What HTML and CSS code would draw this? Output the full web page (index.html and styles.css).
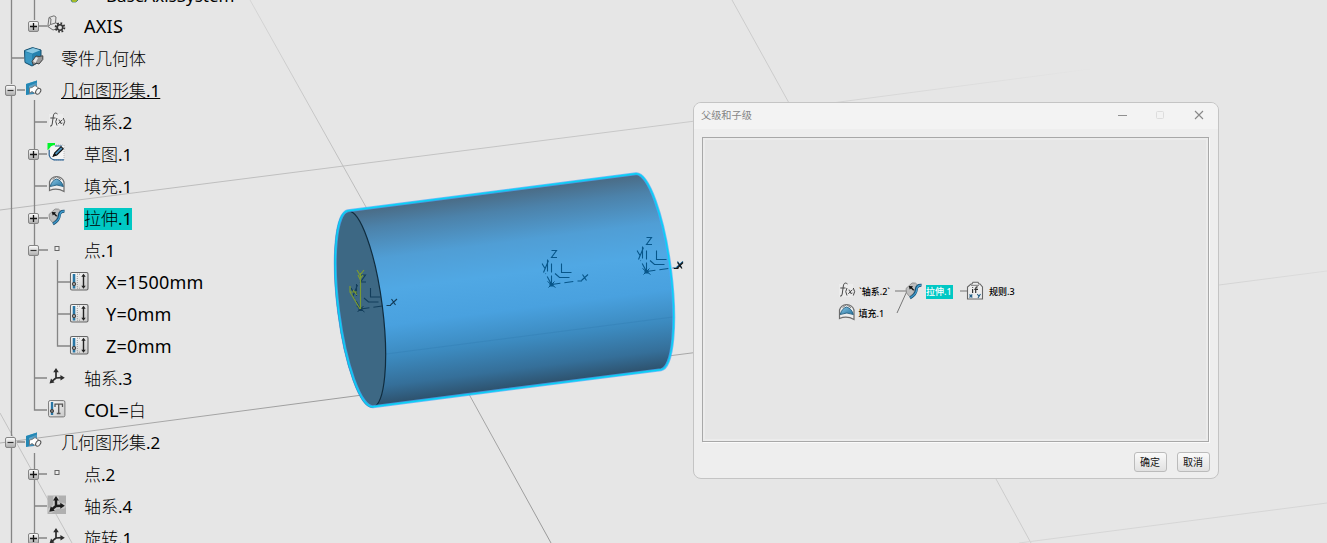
FILE: index.html
```html
<!DOCTYPE html>
<html lang="zh-CN">
<head>
<meta charset="utf-8">
<title>父级和子级</title>
<link rel="stylesheet" href="styles.css">
</head>
<body>
<svg class="defs" aria-hidden="true">
  <defs>
    <linearGradient id="btn" x1="0" y1="0" x2="0" y2="1"><stop offset="0" stop-color="#fff"/><stop offset="1" stop-color="#aaa"/></linearGradient>
    <linearGradient id="blue" x1="0" y1="0" x2="1" y2="1"><stop offset="0" stop-color="#8bc8e6"/><stop offset="1" stop-color="#23729f"/></linearGradient>
    <linearGradient id="paper" x1="0" y1="0" x2="1" y2="1"><stop offset="0" stop-color="#fff"/><stop offset="1" stop-color="#c8c8c8"/></linearGradient>
  </defs>
  <symbol id="plus" viewBox="0 0 11 11"><rect x=".5" y=".5" width="10" height="10" rx="1.5" fill="url(#btn)" stroke="#858585"/><path d="M2 5.5H9M5.5 2V9" stroke="#151515" stroke-width="1.3"/></symbol>
  <symbol id="minus" viewBox="0 0 11 11"><rect x=".5" y=".5" width="10" height="10" rx="1.5" fill="url(#btn)" stroke="#858585"/><path d="M2.5 5.5H8.5" stroke="#333" stroke-width="1.2"/></symbol>
  <symbol id="gear" viewBox="0 0 20 20"><path d="M2 2.5L7 .8 9 2 8.5 8 11 8.5 9 14 6 15 .8 11.5ZM2 2.5L4 4 3.5 9.5 .8 11.5M3.5 9.5L8.5 8" fill="#e5e5e5" stroke="#707070" stroke-width="1"/><circle cx="13" cy="12.5" r="4.3" fill="none" stroke="#333" stroke-width="2" stroke-dasharray="1.7 1.67"/><circle cx="13" cy="12.5" r="2.7" fill="#ddd" stroke="#333" stroke-width="1.5"/></symbol>
  <symbol id="part" viewBox="0 0 20 20"><path d="M.5 3.5L8.5 .6 17 3V14L8 19 1 15.5Z" fill="#2581ad" stroke="#164e6d"/><path d="M1 4L9 1 16.3 3.2 8.3 6.5Z" fill="#8bc9e3"/><path d="M1.3 5L8 7V18L1.5 15Z" fill="#3b98c3"/><path d="M8 14.5L12 9 15 9.5 18.8 8.8V12.5L15 17 12 16 9.5 18Z" fill="#999" stroke="#444" stroke-width="1"/><path d="M9 14L12 10 14 11 11.5 16" fill="#e5e5e5"/></symbol>
  <symbol id="set" viewBox="0 0 20 20"><path d="M2 5L13 1.5V9L10 15 2 16Z" fill="url(#blue)"/><path d="M2 5L13 1.5V3.5L5 7V15L2 16Z" fill="#2488b5"/><path d="M5.5 9L8 8.5 11 6.5 16 10 11 14.5 8 12.5 5.5 14Z" fill="#fff" stroke="#777" stroke-width=".9"/><ellipse cx="14.2" cy="12.2" rx="2.2" ry="3.2" transform="rotate(35 14.2 12.2)" fill="#f2f2f2" stroke="#555"/></symbol>
  <symbol id="fx" viewBox="0 0 20 20"><rect x="2" y="3" width="14" height="13" fill="#f0f0f0" opacity=".6"/><path d="M10.5 3C7.6 .7 6.5 3 6.2 6L5.2 13Q4.8 16 3 15M3.3 7H8.5M10 7Q7.5 10.5 10 14.5M16.3 7Q19 10.5 16.3 14.5M11.6 9Q13 8.5 13.2 11T15.4 12M15.4 8.7L11.3 12.8" fill="none" stroke="#484848" stroke-width="1"/></symbol>
  <symbol id="sketch" viewBox="0 0 20 20"><path d="M3 2H17V17H6L2 13Z" fill="#f5f5f5" stroke="#bbb" stroke-dasharray="1 1"/><path d="M2.2 7V12Q3 16 7 16.8H17M8 3H15" fill="none" stroke="#2f6799" stroke-width="1.2"/><path d="M.5 0H8V2Q5 2 3.8 3.5T1 7H.5Z" fill="#00f52b"/><path d="M6.5 13L7.8 9.8 14 3.7 16.2 5.7 9.8 12Z" fill="#4a91bd" stroke="#111" stroke-width="1.1"/><path d="M5.3 14L7.5 9.8 9.5 12.2Z" fill="#111"/></symbol>
  <symbol id="fill" viewBox="0 0 20 20"><path d="M2.5 15.5V7Q4 2 9.5 1.5 15.5 2 17 7V16.5Q10 12.5 2.5 15.5Z" fill="#eee" stroke="#6c6c6c" stroke-width="1.2"/><path d="M3.2 11.5Q4.8 5.5 9.5 4 14.8 5.5 16.3 11.5 10 8.5 3.2 11.5Z" fill="url(#blue)" stroke="#255f80" stroke-width=".9"/><path d="M5.5 4.7L9.5 1.5 14 4.7" fill="none" stroke="#777"/></symbol>
  <symbol id="extrude" viewBox="0 0 20 20"><path d="M2 7.5L8 2Q12 1 14 4.5L11 8.5 9.5 12.5 5.5 15.5 2.5 12Z" fill="#bebebe" stroke="#858585" stroke-width=".8"/><path d="M17.5 4.3Q12.8 4 12.3 8.5 12 13.500 6 17" fill="none" stroke="#174d70" stroke-width="3"/><path d="M17.2 4.3Q13.300 4 12.7 8.5 12.300 13.500 6.300 16.700" fill="none" stroke="#3e9acb" stroke-width="1.5"/><path d="M4.800 5L9 5.300 8 6.400 10.200 8.800 9.200 9.800 7 7.400 5.700 8.500Z" fill="#151515"/></symbol>
  <symbol id="point" viewBox="0 0 20 20"><rect x="8" y="7.5" width="4" height="4" fill="#eee" stroke="#666"/></symbol>
  <symbol id="length" viewBox="0 0 20 20"><rect x="1.5" y="1.5" width="17.5" height="17.5" rx="1.5" fill="url(#paper)" stroke="#666" stroke-width="1.1"/><path d="M5 3V17.5" stroke="#2876a5" stroke-width="2.6"/><path d="M8 3.200H11.5M8 17.200H11.5M8.300 5V16" stroke="#999" stroke-dasharray="1 1"/><circle cx="5" cy="13" r="1.7" fill="#999" stroke="#444"/><path d="M14.5 5V16" stroke="#222" stroke-width="1.4"/><path d="M14.5 2.700L16.700 5.700H12.300ZM14.5 17.700L16.700 14.700H12.300Z" fill="#222"/></symbol>
  <symbol id="string" viewBox="0 0 20 20"><rect x="1.6" y="1.6" width="16.3" height="16.3" rx="1.5" fill="url(#paper)" stroke="#777"/><path d="M5 3V16" stroke="#2876a5" stroke-width="2.4"/><circle cx="5" cy="12" r="1.6" fill="#777" stroke="#444"/><path d="M8 8V5.2H15.5V8M11.7 5V14.5M9.8 14.5H13.5" fill="none" stroke="#555" stroke-width="1.3"/></symbol>
  <symbol id="axis" viewBox="0 0 20 20"><path d="M9 11V4M9 11L14.5 10.7M9 11L4.5 14.7" fill="none" stroke="#2d2d2d" stroke-width="1.7"/><path d="M9 1L11.8 5.3H6.2ZM17.8 10.8L13.5 13.6 13.4 8ZM2.5 16.5L4 11.5 7.5 15.6Z" fill="#2d2d2d"/></symbol>
  <symbol id="axis-shaded" viewBox="0 0 20 20"><rect x=".5" y=".5" width="18.5" height="18.5" fill="#b0b0b0"/><path d="M9 11V3M9 11L16 10.7M9 11L4 15" fill="none" stroke="#c9c9c9" stroke-width="6" stroke-linecap="round"/><path d="M9 11V4M9 11L14.5 10.7M9 11L4.500 14.700" fill="none" stroke="#1c1c1c" stroke-width="2.400"/><path d="M9 1L12 5.500H6ZM17.800 10.800L13.300 13.800 13.300 7.800ZM2.300 16.700L3.800 11.200 7.800 15.800Z" fill="#1c1c1c"/></symbol>
  <symbol id="rule" viewBox="0 0 20 20"><path d="M2.5 18V6L6 3H7L8 1.3H13L14 3H15L17.5 6V18Z" fill="#ededed" stroke="#666" stroke-width="1.1"/><path d="M6 4.3H14" stroke="#777"/><path d="M7.6 6V6.8M7.6 8V12M12.7 6Q10.7 5.5 10.7 8V12M9.3 8.3H13" fill="none" stroke="#333" stroke-width="1.2"/><path d="M4.5 13.5L7.3 16.5M7.3 13.5L4.5 16.5M12.3 13L14 15.5M15.5 13L13 17" stroke="#245f87" stroke-width="1.1"/></symbol>
  <symbol id="triad" viewBox="0 0 50 50">
    <path d="M10 38V15M10 38L4 27" fill="none" stroke="currentColor" stroke-width="1.1" stroke-dasharray="9 3"/>
    <path d="M10 38L35 34.5" stroke="currentColor" stroke-width="1.1" stroke-dasharray="9 4"/>
    <path d="M20 17V26H30M13.5 27L18 31H28" fill="none" stroke="currentColor" stroke-width="1.1"/>
    <path d="M10 4H15L10 11H15.5M.5 17L3.5 22M7 14L2 26M6 13V25M36 34.5H40.5M41 28L45 34M46.5 28L40 34" fill="none" stroke="currentColor" stroke-width="1.1"/>
    <path d="M6 35L14 41M7 41L13 35" stroke="currentColor"/><rect x="8" y="36.5" width="4" height="3.5" fill="currentColor"/>
  </symbol>
</svg>

<main class="viewport">
  <svg class="scene" viewBox="0 0 1327 543">
    <defs>
      <linearGradient id="body" gradientUnits="userSpaceOnUse" x1="492" y1="192" x2="517" y2="389">
        <stop offset="0" stop-color="#4a6a83"/><stop offset=".1" stop-color="#4c82aa"/><stop offset=".26" stop-color="#509ed5"/><stop offset=".42" stop-color="#50a8e4"/><stop offset=".6" stop-color="#49a1df"/><stop offset=".76" stop-color="#3c8abf"/><stop offset=".9" stop-color="#356f99"/><stop offset="1" stop-color="#2d4f69"/>
      </linearGradient>
      <linearGradient id="fade" gradientUnits="userSpaceOnUse" x1="0" y1="0" x2="1100" y2="0"><stop offset="0" stop-color="#b9b9b9"/><stop offset=".6" stop-color="#c8c8c8"/><stop offset="1" stop-color="#e6e6e6"/></linearGradient>
      <linearGradient id="fade2" gradientUnits="userSpaceOnUse" x1="0" y1="0" x2="1340" y2="0"><stop offset="0" stop-color="#b0b0b0"/><stop offset=".3" stop-color="#999"/><stop offset=".55" stop-color="#aaa"/><stop offset="1" stop-color="#dedede"/></linearGradient>
      <linearGradient id="fade3" gradientUnits="userSpaceOnUse" x1="0" y1="0" x2="0" y2="543"><stop offset="0" stop-color="#d6d6d6"/><stop offset=".4" stop-color="#b8b8b8"/><stop offset="1" stop-color="#999"/></linearGradient>
    </defs>
    <path d="M0 210L693 121.3L1090 69" fill="none" stroke="url(#fade)"/>
    <path d="M0 443L358 395.6L693 352.8L1219 285L1327 271" fill="none" stroke="url(#fade2)"/>
    <path d="M250 0L366 207L470 396L551 543" fill="none" stroke="url(#fade3)"/>
    <path d="M732 0L789 103L996 479L1031 543" fill="none" stroke="#ccc"/>
    <path d="M1019 543L1327 503" stroke="#d6d6d6"/>
    <path d="M0 413L72 543" stroke="#c3c3c3"/>

    <path d="M348 210.7L636 173.7A22.3 98.8 -7.3 0 1 661 369.7L373 406.7Z" fill="url(#body)"/>
    <path d="M386 354L673 317" stroke="#347fb5" stroke-opacity=".5"/>
    <ellipse cx="360.2" cy="309" rx="22.3" ry="98.8" transform="rotate(-7.3 360.2 309)" fill="#3d6884" stroke="#102c3e" stroke-width="1.2"/>
    <path class="outline-glow" d="M348 210.7L636 173.7A22.3 98.8 -7.3 0 1 661 369.7L373 406.7A22.3 98.8 -7.3 0 1 348 210.7Z"/>
    <path class="outline" d="M348 210.7L636 173.7A22.3 98.8 -7.3 0 1 661 369.7L373 406.7A22.3 98.8 -7.3 0 1 348 210.7Z"/>
    <g color="#07568a">
      <use href="#triad" x="541.5" y="246.5" width="50" height="50"/>
      <use href="#triad" x="636.5" y="233.5" width="50" height="50"/>
    </g>
    <use href="#triad" x="350.5" y="271" width="50" height="50" color="#133d5a"/>
    <path d="M360.5 309V273M357 270L360 275 364 270M358 275L360 279 363 275M360 309L350 292M350 286V292H357M353 290L357 295" fill="none" stroke="#7b9b32" stroke-width="1.2"/>
    <path d="M674 268.5H678.5M677.5 262.5L682 268.5M683 262.5L677 268.5" stroke="#111" stroke-width="1.2"/>

    <g class="links">
      <path d="M11.5 0V84M11.5 96V436M11.5 448V543"/>
      <path d="M34.5 0V20M34.5 100V410H47M34.5 453V543"/>
      <path d="M57.5 260V346H70M57.5 282H70M57.5 314H70"/>
      <path d="M39 26H47M12 58H24M17 90H25M35 122H47M39 154H47M35 186H47M39 218H48M39 250H48M35 378H47M17 442H25M39 474H47M35 506H47M39 538H47"/>
    </g>
    <path d="M71 0H78L76 2H72Z" fill="#f1e900" stroke="#176575" stroke-width=".7"/>
  </svg>

  <section class="tree">
    <div class="row l2 latin first"><span class="toggle"></span><span class="icon"></span><span>BaseAxisSystem</span></div>
    <div class="row l1 latin"><svg class="toggle"><use href="#plus"/></svg><svg class="icon"><use href="#gear"/></svg><span>AXIS</span></div>
    <div class="row"><span class="toggle"></span><svg class="icon"><use href="#part"/></svg><span class="label">零件几何体</span></div>
    <div class="row"><svg class="toggle"><use href="#minus"/></svg><svg class="icon"><use href="#set"/></svg><span class="label current">几何图形集<b>.1</b></span></div>
    <div class="row l1"><span class="toggle"></span><svg class="icon"><use href="#fx"/></svg><span class="label">轴系<b>.2</b></span></div>
    <div class="row l1"><svg class="toggle"><use href="#plus"/></svg><svg class="icon"><use href="#sketch"/></svg><span class="label">草图<b>.1</b></span></div>
    <div class="row l1"><span class="toggle"></span><svg class="icon"><use href="#fill"/></svg><span class="label">填充<b>.1</b></span></div>
    <div class="row l1"><svg class="toggle"><use href="#plus"/></svg><svg class="icon"><use href="#extrude"/></svg><span class="label selected">拉伸<b>.1</b></span></div>
    <div class="row l1"><svg class="toggle"><use href="#minus"/></svg><svg class="icon"><use href="#point"/></svg><span class="label">点<b>.1</b></span></div>
    <div class="row l2 latin"><span class="toggle"></span><svg class="icon"><use href="#length"/></svg><span>X=1500mm</span></div>
    <div class="row l2 latin"><span class="toggle"></span><svg class="icon"><use href="#length"/></svg><span>Y=0mm</span></div>
    <div class="row l2 latin"><span class="toggle"></span><svg class="icon"><use href="#length"/></svg><span>Z=0mm</span></div>
    <div class="row l1"><span class="toggle"></span><svg class="icon"><use href="#axis"/></svg><span class="label">轴系<b>.3</b></span></div>
    <div class="row l1"><span class="toggle"></span><svg class="icon"><use href="#string"/></svg><span class="label"><b class="name">COL=</b>白</span></div>
    <div class="row"><svg class="toggle"><use href="#minus"/></svg><svg class="icon"><use href="#set"/></svg><span class="label">几何图形集<b>.2</b></span></div>
    <div class="row l1"><svg class="toggle"><use href="#plus"/></svg><svg class="icon"><use href="#point"/></svg><span class="label">点<b>.2</b></span></div>
    <div class="row l1"><span class="toggle"></span><svg class="icon"><use href="#axis-shaded"/></svg><span class="label">轴系<b>.4</b></span></div>
    <div class="row l1"><svg class="toggle"><use href="#plus"/></svg><svg class="icon"><use href="#axis"/></svg><span class="label">旋转<b>.1</b></span></div>
  </section>

  <section class="dialog">
    <header class="titlebar">
      <span>父级和子级</span>
      <svg class="controls" viewBox="0 0 88 12"><path d="M1 6.5H10" stroke="#8f8f8f" stroke-width="1.2"/><rect x="39.5" y="2.5" width="7" height="7" rx="1" fill="none" stroke="#ddd"/><path d="M78 2L86 10M86 2L78 10" stroke="#888" stroke-width="1.1"/></svg>
    </header>
    <div class="graph">
      <svg class="edges" viewBox="0 0 505 303"><path d="M192 153H204M194 175L204 153M257 153H264" fill="none" stroke="#777"/></svg>
      <div class="node formula"><svg class="icon"><use href="#fx"/></svg><span>`轴系.2`</span></div>
      <div class="node patch"><svg class="icon"><use href="#fill"/></svg><span>填充.1</span></div>
      <div class="node center"><svg class="icon"><use href="#extrude"/></svg><span class="selected">拉伸.1</span></div>
      <div class="node ruleset"><svg class="icon"><use href="#rule"/></svg><span>规则.3</span></div>
    </div>
    <footer class="actions"><button>确定</button><button>取消</button></footer>
  </section>
</main>
</body>
</html>
```
FILE: styles.css
```css
* { box-sizing: border-box; }
body { margin: 0; font-family: "Noto Sans", "Noto Sans CJK SC", sans-serif; color: #111; }
.defs { position: absolute; width: 0; height: 0; }
.viewport { position: relative; width: 1327px; height: 543px; overflow: hidden; background: #e6e6e6; }
.scene { position: absolute; inset: 0; width: 1327px; height: 543px; }
.outline-glow { fill: none; stroke: #45a9ff; stroke-width: 3; stroke-opacity: .75; stroke-linejoin: round; }
.outline { fill: none; stroke: #08d3f4; stroke-width: 1.4; stroke-linejoin: round; }
.links { fill: none; stroke: #858585; stroke-width: 1.3; }

.tree { position: relative; display: flex; flex-direction: column; width: 240px; margin-top: -22px; }
.row { display: flex; align-items: center; height: 32px; padding-left: 5px; font-size: 17px; line-height: 22px; font-weight: 300; white-space: nowrap; color: #000; }
.row b { font-weight: 400; }
.row b.name { font-size: 18px; }
.row.l1 { padding-left: 28px; }
.row.l2 { padding-left: 50px; }
.row.latin { font-size: 18px; font-weight: 400; letter-spacing: .25px; }
.row.first { padding-top: 3px; font-size: 17px; letter-spacing: 0; }
.toggle { flex: none; width: 11px; height: 11px; margin-right: 8px; }
.icon { flex: none; width: 20px; height: 20px; }
.row .icon { margin-right: 17px; margin-bottom: 2px; }
.label { margin-top: 1px; }
.current { text-decoration: underline; text-decoration-thickness: 1px; text-underline-offset: 1px; }
.selected { background: #00c8c4; }

.dialog { position: absolute; left: 693px; top: 102px; width: 526px; height: 377px; display: flex; flex-direction: column; border: 1.5px solid #c4c4c4; border-radius: 8px; background: #eee; overflow: hidden; }
.titlebar { display: flex; align-items: center; justify-content: space-between; height: 26px; padding: 0 13px 2px 7px; background: #f3f3f3; color: #858585; font-size: 10.2px; }
.titlebar span { margin-top: -1px; }
.controls { width: 88px; height: 12px; }
.graph { position: relative; width: 507px; height: 305px; margin: 8px 0 0 8px; border: 1px solid #a8a8a8; background: #e6e6e6; box-shadow: inset 0 0 0 2px #ececec, 1px 1px 0 #fafafa; }
.edges { position: absolute; left: 0; top: 0; width: 505px; height: 303px; }
.node { position: absolute; display: flex; align-items: center; height: 20px; font-size: 9px; line-height: 14px; font-weight: 500; white-space: nowrap; color: #000; }
.formula { left: 134px; top: 143px; }
.patch { left: 133.5px; top: 165px; }
.center { left: 201px; top: 143px; }
.ruleset { left: 262px; top: 143px; }
.node span { margin: 1px 0 0 2px; }
.ruleset span { margin-left: 4px; }
.node .selected { padding-right: 1px; color: #fff; }
.actions { display: flex; justify-content: flex-end; gap: 10px; padding: 10px 8.5px 0 0; }
button { width: 33px; height: 20px; padding: 0; border: 1px solid #bbb; border-radius: 3px; background: linear-gradient(#fafafa, #e1e1e1); color: #111; font: 10px/16px "Noto Sans CJK SC", sans-serif; }
```
